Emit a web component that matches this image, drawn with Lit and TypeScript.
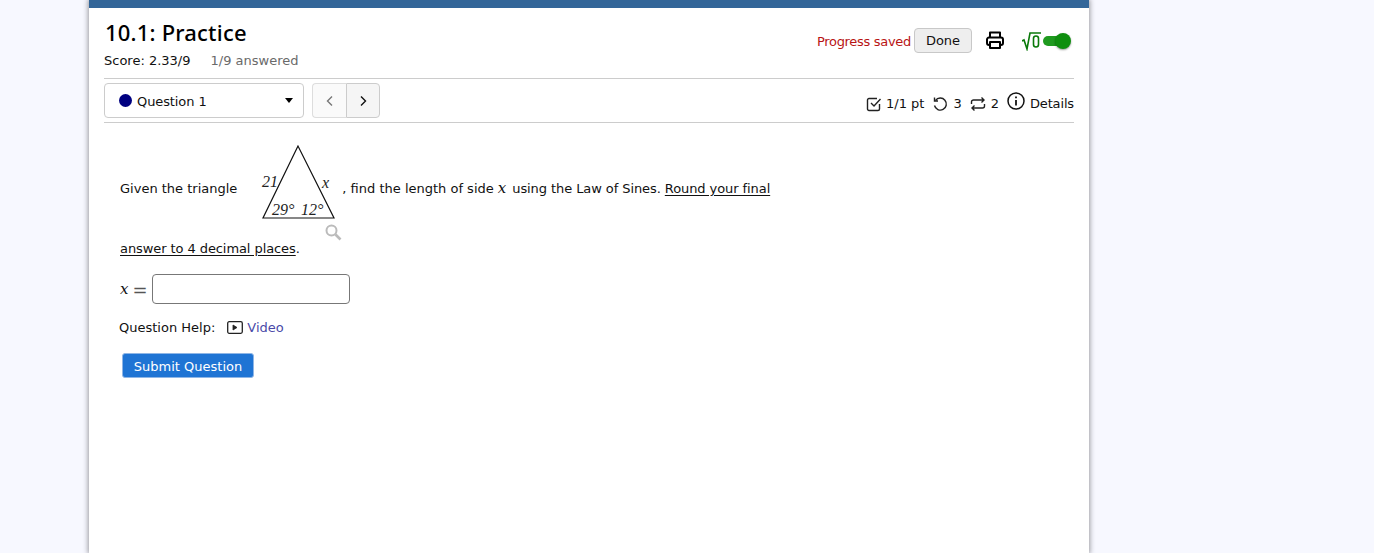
import { css, html, LitElement } from 'lit';
import { customElement } from 'lit/decorators.js';

@customElement('app-root')
export class AppRoot extends LitElement {
    static override styles = css`
        :host {
            display: block;
            height: 553px;
            overflow: hidden;
            background: #f7f8ff;
            font-family: 'DejaVu Sans', Tahoma, sans-serif;
            font-size: 13px;
            color: #111;
        }
        .page {
            box-sizing: border-box;
            width: 1000px;
            height: 553px;
            margin-left: 89px;
            background: #fff;
            border-top: 8px solid #336699;
            box-shadow: 0 0 5px 1px #9a9aa0;
            padding: 0 15px;
        }
        .head {
            display: flex;
            justify-content: space-between;
            height: 70px;
            border-bottom: 1px solid #ccc;
        }
        h1 {
            margin: 9px 0 0 1px;
            font-family: 'Noto Sans', Tahoma, sans-serif;
            font-size: 22px;
            line-height: 30px;
            font-weight: 500;
            letter-spacing: 0.2px;
            color: #000;
        }
        .score {
            display: flex;
            gap: 20px;
            margin-top: 5px;
            line-height: 18px;
        }
        .answered {
            color: #6a6a6a;
        }
        .tools {
            display: flex;
            align-items: center;
            height: 26px;
            margin-top: 19px;
            padding-right: 3px;
        }
        .saved {
            color: #b81414;
            margin: 2px 3px 0 0;
            letter-spacing: -0.3px;
        }
        .done {
            box-sizing: border-box;
            width: 58px;
            height: 25px;
            padding: 1px 0 0;
            background: #eee;
            border: 1px solid #c8c8c8;
            border-radius: 4px;
            font: inherit;
            color: #111;
        }
        .printer {
            margin-left: 13px;
            width: 20px;
            height: 20px;
        }
        .sqrt {
            margin: 1px 0 0 17px;
            width: 20px;
            height: 20px;
        }
        .toggle {
            position: relative;
            width: 26px;
            height: 10px;
            margin: 2px 2px 0 1px;
            border-radius: 5px;
            background: #1f9a1f;
        }
        .toggle::after {
            content: '';
            position: absolute;
            right: -2px;
            top: -3px;
            width: 16px;
            height: 16px;
            border-radius: 50%;
            background: #0f8f0f;
            box-shadow: 0 1px 2px #0006;
        }
        .nav {
            display: flex;
            align-items: center;
            height: 43px;
            border-bottom: 1px solid #ccc;
        }
        .select {
            box-sizing: border-box;
            display: flex;
            align-items: center;
            width: 200px;
            height: 35px;
            padding: 0 10px 0 14px;
            border: 1px solid #ccc;
            border-radius: 4px;
        }
        .select .label {
            margin-top: 1px;
            letter-spacing: -0.1px;
        }
        .dot {
            width: 13px;
            height: 13px;
            border-radius: 50%;
            background: #000080;
            margin-right: 5px;
        }
        .caret {
            margin-left: auto;
            width: 0;
            height: 0;
            border: 4px solid transparent;
            border-top: 5px solid #000;
            border-bottom: 0;
        }
        .pager {
            display: flex;
            margin-left: 8px;
        }
        .pager button {
            box-sizing: border-box;
            display: flex;
            align-items: center;
            justify-content: center;
            width: 34px;
            height: 35px;
            padding: 0;
            background: #fafafa;
            border: 1px solid #ddd;
        }
        .pager button:first-child {
            border-radius: 4px 0 0 4px;
            border-right: 0;
        }
        .pager button:last-child {
            border-radius: 0 4px 4px 0;
            background: #f5f5f5;
            border-color: #ccc;
        }
        .meta {
            display: flex;
            align-items: center;
            margin-left: auto;
            margin-top: 6px;
            gap: 5px;
        }
        .meta svg {
            display: block;
        }
        .details {
            letter-spacing: -0.15px;
        }
        .check {
            margin-right: -1px;
        }
        .info {
            margin: -6px 0 0 3px;
        }
        .gap {
            margin-left: 3px;
        }
        .question {
            padding: 0 0 0 16px;
        }
        .first {
            display: flex;
            align-items: flex-start;
            margin-top: 21px;
            height: 78px;
        }
        .first > span {
            margin-top: 36px;
            line-height: 18px;
        }
        .figure {
            position: relative;
            width: 80px;
            height: 78px;
            margin: 0 2px 0 23px;
        }
        .figure text {
            font-family: 'Liberation Serif', serif;
            font-style: italic;
            font-size: 16px;
            fill: #222;
        }
        .zoom {
            position: absolute;
            left: 65px;
            top: 80px;
        }
        .var {
            font-family: 'DejaVu Serif', serif;
            font-style: italic;
            font-size: 15px;
            line-height: 1;
            padding: 0 6px 0 4px;
        }
        .tight {
            letter-spacing: -0.08px;
        }
        u {
            text-underline-offset: 2px;
        }
        .second {
            margin-top: 18px;
            line-height: 18px;
            letter-spacing: -0.08px;
        }
        .answer {
            display: flex;
            align-items: center;
            margin-top: 16px;
        }
        .answer input {
            box-sizing: border-box;
            width: 198px;
            height: 30px;
            margin-left: 4px;
            border: 1px solid #777;
            border-radius: 4px;
            background: #fff;
        }
        .math-x {
            font-family: 'DejaVu Serif', serif;
            font-style: italic;
            font-size: 15px;
        }
        .math-eq {
            margin-left: 4px;
            font-size: 18px;
            color: #555;
        }
        .help {
            display: flex;
            align-items: center;
            margin: 15px 0 0 -1px;
            line-height: 18px;
        }
        .help svg {
            margin: -2px 4px 0 12px;
        }
        .help a {
            color: #4a4aa8;
        }
        .submit {
            display: block;
            box-sizing: border-box;
            width: 132px;
            height: 25px;
            margin: 16px 0 0 2px;
            padding: 1px 0 0;
            background: #1f74d4;
            border: 1px solid #8fb6e6;
            border-radius: 3px;
            color: #fff;
            font: inherit;
            font-weight: 500;
        }
    `;

    override render() {
        return html`
            <div class="page">
                <div class="head">
                    <div>
                        <h1>10.1: Practice</h1>
                        <div class="score">
                            <span>Score: 2.33/9</span>
                            <span class="answered">1/9 answered</span>
                        </div>
                    </div>
                    <div class="tools">
                        <span class="saved">Progress saved</span>
                        <button class="done">Done</button>
                        <svg class="printer" viewBox="0 0 20 20" fill="none" stroke="#000" stroke-width="2" stroke-linejoin="round">
                            <path d="M5 7V2.5h10V7" />
                            <path d="M5 15H4a2 2 0 0 1-2-2V9.5a2 2 0 0 1 2-2h12a2 2 0 0 1 2 2V13a2 2 0 0 1-2 2h-1" />
                            <path d="M5 12h10v6H5z" />
                        </svg>
                        <svg class="sqrt" viewBox="0 0 20 20" fill="none" stroke="#0a7a0a" stroke-width="1.6">
                            <path d="M0 10l2-1 3 9 3-16h11" />
                            <rect x="11.5" y="5" width="5" height="11" rx="2.5" />
                        </svg>
                        <div class="toggle"></div>
                    </div>
                </div>
                <div class="nav">
                    <div class="select">
                        <span class="dot"></span>
                        <span class="label">Question 1</span>
                        <span class="caret"></span>
                    </div>
                    <div class="pager">
                        <button aria-label="Previous">
                            <svg width="10" height="12" viewBox="0 0 10 12" fill="none" stroke="#777" stroke-width="1.4">
                                <path d="M7 1.5L2.5 6 7 10.5" />
                            </svg>
                        </button>
                        <button aria-label="Next">
                            <svg width="10" height="12" viewBox="0 0 10 12" fill="none" stroke="#111" stroke-width="1.4">
                                <path d="M3 1.5L7.5 6 3 10.5" />
                            </svg>
                        </button>
                    </div>
                    <div class="meta">
                        <svg class="check" width="16" height="16" viewBox="0 0 16 16" fill="none" stroke="#222" stroke-width="1.4">
                            <path d="M13.5 8v5a1.5 1.5 0 0 1-1.5 1.5H3A1.5 1.5 0 0 1 1.5 13V4A1.5 1.5 0 0 1 3 2.5h8" />
                            <path d="M5 7l3 3 6.5-7" />
                        </svg>
                        <span>1/1 pt</span>
                        <svg class="gap" width="16" height="16" viewBox="0 0 16 16" fill="none" stroke="#222" stroke-width="1.4">
                            <path d="M3.5 4.5a6 6 0 1 1-1 5" />
                            <path d="M2.5 1.5v3.5H6" />
                        </svg>
                        <span>3</span>
                        <svg class="gap" width="16" height="16" viewBox="0 0 16 16" fill="none" stroke="#222" stroke-width="1.4">
                            <path d="M1.5 8V6a2 2 0 0 1 2-2H14M11.5 1.5L14 4l-2.5 2.5" />
                            <path d="M14.5 8v2a2 2 0 0 1-2 2H2M4.5 9.5L2 12l2.5 2.5" />
                        </svg>
                        <span>2</span>
                        <svg class="info" width="18" height="18" viewBox="0 0 18 18" fill="none" stroke="#111" stroke-width="1.5">
                            <circle cx="9" cy="9" r="8" />
                            <path d="M9 8v5.5" stroke-width="1.8" />
                            <path d="M9 4.5v1.8" stroke-width="1.8" />
                        </svg>
                        <span class="details">Details</span>
                    </div>
                </div>
                <div class="question">
                    <div class="first">
                        <span>Given the triangle</span>
                        <div class="figure">
                            <svg width="80" height="78" viewBox="0 0 80 78">
                                <path d="M38 2L3 74h71z" fill="none" stroke="#111" stroke-width="1.2" />
                                <text x="2" y="43">21</text>
                                <text x="62" y="44">x</text>
                                <text x="12" y="71">29°</text>
                                <text x="41" y="71">12°</text>
                            </svg>
                            <svg class="zoom" width="17" height="17" viewBox="0 0 17 17" fill="none" stroke="#bbb" stroke-width="2">
                                <circle cx="6.5" cy="6.5" r="5" />
                                <path d="M10.5 10.5l5 5" stroke-width="2.6" />
                            </svg>
                        </div>
                        <span>, find the length of side<span class="var">x</span><span class="tight">using the Law of Sines. <u>Round your final</u></span></span>
                    </div>
                    <div class="second"><u>answer to 4 decimal places</u>.</div>
                    <div class="answer">
                        <span class="math-x">x</span>
                        <span class="math-eq">=</span>
                        <input type="text" />
                    </div>
                    <div class="help">
                        <span>Question Help:</span>
                        <svg width="16" height="13" viewBox="0 0 16 13" fill="none" stroke="#222" stroke-width="1.3">
                            <rect x=".7" y=".7" width="14.6" height="11.6" rx="1.5" />
                            <path d="M6 4l4 2.5L6 9z" fill="#222" stroke-width=".8" />
                        </svg>
                        <a>Video</a>
                    </div>
                    <button class="submit">Submit Question</button>
                </div>
            </div>
        `;
    }
}
